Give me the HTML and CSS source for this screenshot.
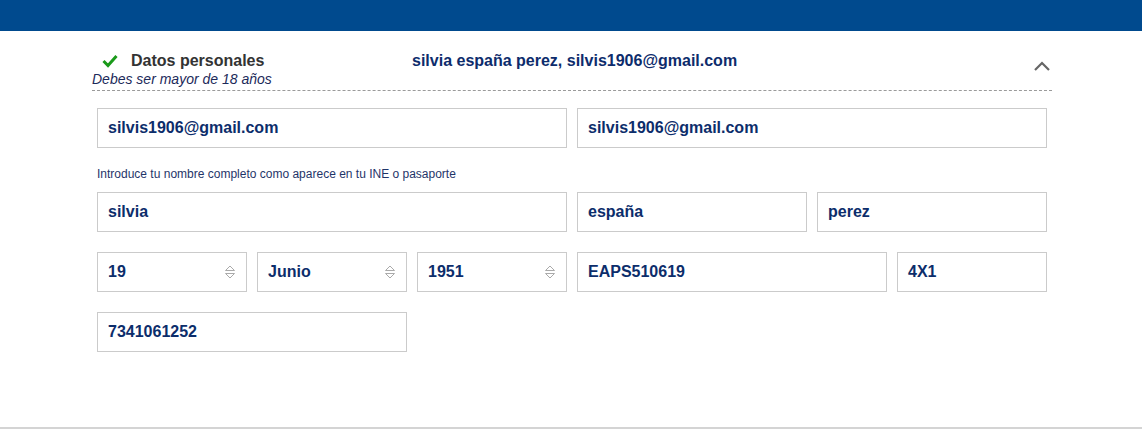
FILE: index.html
```html
<!DOCTYPE html>
<html lang="es">
<head>
<meta charset="utf-8">
<title>Datos personales</title>
<link rel="stylesheet" href="styles.css">
</head>
<body>
<div class="topbar"></div>
<div class="content">
  <section class="panel">
    <header class="panel-head">
      <div class="head-row">
        <svg class="check" width="16" height="14" viewBox="0 0 16 14"><path d="M1.5 7 L6 11.5 L14.5 2" fill="none" stroke="#1a9a1a" stroke-width="3"/></svg>
        <h2 class="title">Datos personales</h2>
        <span class="summary">silvia españa perez, silvis1906@gmail.com</span>
        <svg class="chev" width="18" height="10" viewBox="0 0 18 10"><path d="M2 9 L9 2 L16 9" fill="none" stroke="#666" stroke-width="2.2"/></svg>
      </div>
      <p class="subtitle">Debes ser mayor de 18 años</p>
    </header>
    <div class="form">
      <div class="row">
        <div class="field w470">silvis1906@gmail.com</div>
        <div class="field w470">silvis1906@gmail.com</div>
      </div>
      <p class="hint">Introduce tu nombre completo como aparece en tu INE o pasaporte</p>
      <div class="row">
        <div class="field w470">silvia</div>
        <div class="field w230">españa</div>
        <div class="field w230">perez</div>
      </div>
      <div class="row gap-top">
        <div class="field w150 select">19<svg class="arrows" width="12" height="16" viewBox="0 0 12 16"><path d="M1.5 6.5 L6 2 L10.5 6.5 Z M1.5 9.5 L6 14 L10.5 9.5 Z" fill="none" stroke="#aaa" stroke-width="1"/></svg></div>
        <div class="field w150 select">Junio<svg class="arrows" width="12" height="16" viewBox="0 0 12 16"><path d="M1.5 6.5 L6 2 L10.5 6.5 Z M1.5 9.5 L6 14 L10.5 9.5 Z" fill="none" stroke="#aaa" stroke-width="1"/></svg></div>
        <div class="field w150 select">1951<svg class="arrows" width="12" height="16" viewBox="0 0 12 16"><path d="M1.5 6.5 L6 2 L10.5 6.5 Z M1.5 9.5 L6 14 L10.5 9.5 Z" fill="none" stroke="#aaa" stroke-width="1"/></svg></div>
        <div class="field w310">EAPS510619</div>
        <div class="field w150">4X1</div>
      </div>
      <div class="row gap-top">
        <div class="field w310">7341061252</div>
      </div>
    </div>
  </section>
</div>
<div class="divider"></div>
</body>
</html>
```

FILE: styles.css
```css
* { box-sizing: border-box; }
html, body { margin: 0; padding: 0; background: #fff; }
body { font-family: "Liberation Sans", Arial, sans-serif; }

.topbar { height: 31px; background: #004a8e; }

.content { height: 396px; }

.panel {
  width: 960px;
  margin-left: calc(50% - 479px);
}

.panel-head {
  padding-top: 20px;
  border-bottom: 1px dashed #9a9a9a;
  padding-bottom: 2px;
}

.head-row {
  display: flex;
  align-items: center;
  height: 20px;
  position: relative;
}

.check { margin-left: 10px; margin-right: 13px; flex: none; }

.title {
  margin: 0;
  font-size: 16px;
  font-weight: bold;
  color: #333;
  line-height: 20px;
  width: 281px;
}

.summary {
  font-size: 16px;
  font-weight: bold;
  color: #0d2c6c;
  line-height: 20px;
}

.chev { position: absolute; right: 1px; top: 10px; }

.subtitle {
  margin: 0;
  font-style: italic;
  font-size: 14px;
  line-height: 17px;
  color: #1c2a5a;
}

.form { padding: 17px 5px 0; }

.row { display: flex; gap: 10px; }
.gap-top { margin-top: 20px; }

.field {
  height: 40px;
  border: 1px solid #cbcbcb;
  padding: 0 10px;
  display: flex;
  align-items: center;
  justify-content: space-between;
  font-size: 16px;
  font-weight: bold;
  color: #0c2d6b;
}

.w470 { width: 470px; }
.w310 { width: 310px; }
.w230 { width: 230px; }
.w150 { width: 150px; }

.arrows { flex: none; }

.hint {
  margin: 18px 0 0;
  height: 26px;
  font-size: 12px;
  line-height: 16px;
  color: #1f3569;
}

.divider { border-top: 2px solid #d4d4d4; }
```
